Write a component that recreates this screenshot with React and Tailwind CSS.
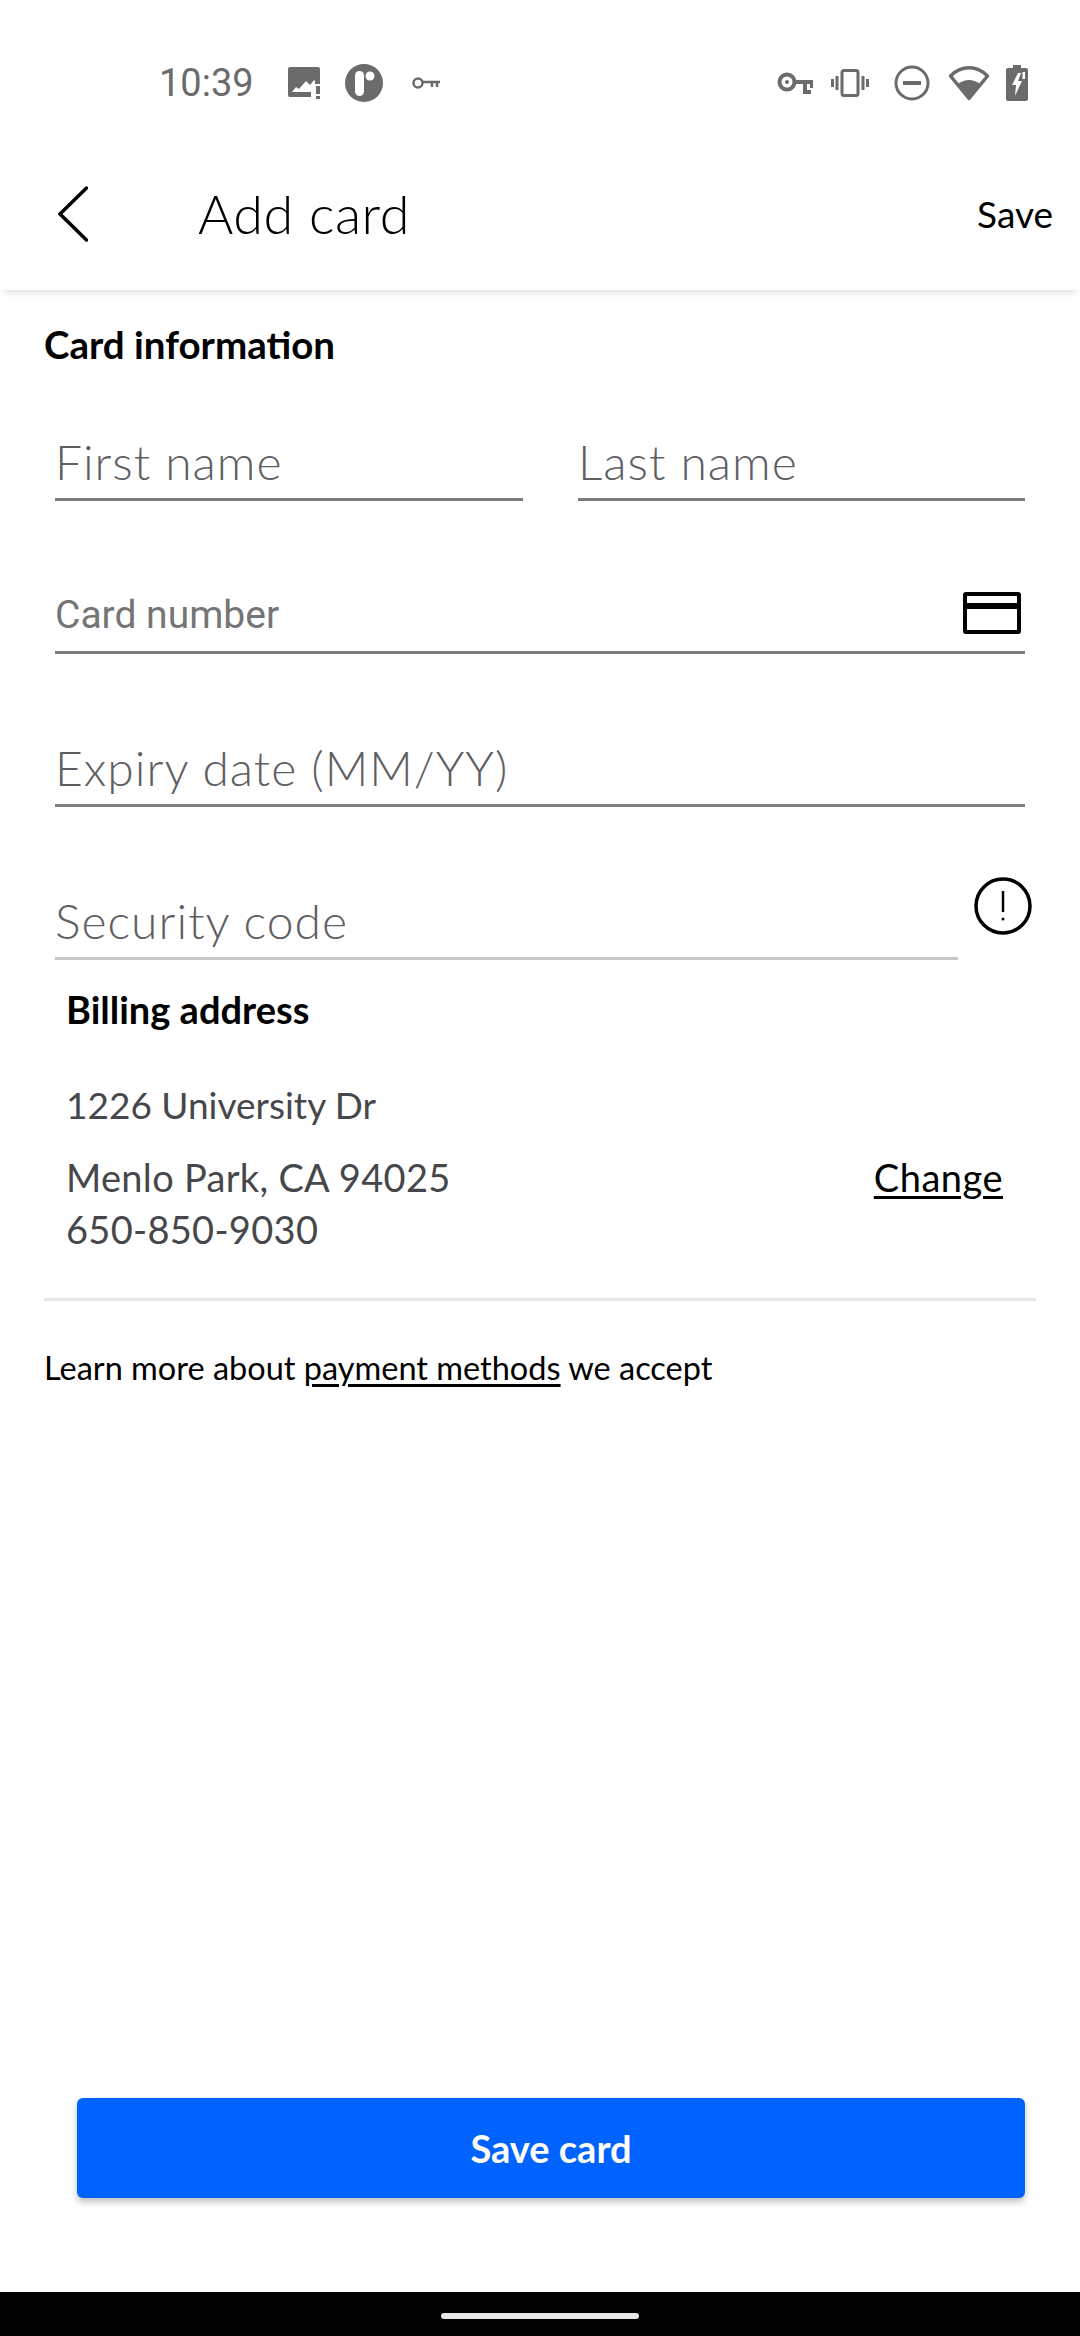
const body = { fontFamily: "Lato, sans-serif" };

function Field({ label, className = "", line = "border-[#7d7d7d]", roboto = false }) {
  return (
    <div className={`h-[63px] border-b-[3px] ${line} ${className}`}>
      <div
        className={roboto ? "text-[39px] leading-[48px] text-[#757575]" : "text-[48px] leading-[48px] font-light tracking-[1px] text-[#5f5f63]"}
        style={roboto ? { fontFamily: "Roboto, sans-serif" } : body}
      >
        {label}
      </div>
    </div>
  );
}

function StatusLeft() {
  return (
    <div className="flex items-center">
      <span className="text-[38px] leading-[44px] text-[#6b6b6b]" style={{ fontFamily: "Roboto, sans-serif" }}>
        10:39
      </span>
      <svg className="ml-[34px]" width="32" height="32" viewBox="0 0 32 32" fill="#6b6b6b">
        <path d="M2 0h28a2 2 0 0 1 2 2v15h-5V14l-1-1-4 5-4-4-7 8-3-2-4 5h19v5H2a2 2 0 0 1-2-2V2a2 2 0 0 1 2-2z" />
        <rect x="28" y="19" width="4" height="8" />
        <rect x="28" y="29" width="4" height="3" />
      </svg>
      <svg className="ml-[25px]" width="38" height="38" viewBox="0 0 38 38">
        <circle cx="19" cy="19" r="19" fill="#6b6b6b" />
        <rect x="10" y="7" width="9" height="25" rx="4.5" fill="#fff" />
        <circle cx="25" cy="12" r="4.5" fill="#fff" />
      </svg>
      <svg className="ml-[29px]" width="28" height="16" viewBox="0 0 28 16" fill="none" stroke="#6b6b6b" strokeWidth="2.5">
        <circle cx="6" cy="8" r="4.5" />
        <path d="M11 7h17M20 7v5M25 7v5" />
      </svg>
    </div>
  );
}

function StatusRight() {
  return (
    <div className="flex items-center">
      <svg width="36" height="22" viewBox="0 0 36 22" fill="none" stroke="#6b6b6b" strokeWidth="4">
        <circle cx="10" cy="10" r="7.5" />
        <circle cx="10" cy="10" r="1" strokeWidth="2" />
        <path d="M18 10h17v6M28 10v10h6" />
      </svg>
      <svg className="ml-[18px]" width="38" height="28" viewBox="0 0 38 28" fill="none" stroke="#6b6b6b">
        <rect x="11" y="1.5" width="16" height="25" rx="2" strokeWidth="3" />
        <path d="M6 7v14M1.5 10v8M32 7v14M36.5 10v8" strokeWidth="3" />
      </svg>
      <svg className="ml-[25px]" width="36" height="36" viewBox="0 0 36 36" fill="none" stroke="#6b6b6b" strokeWidth="3">
        <circle cx="18" cy="18" r="16" />
        <path d="M9 18h18" strokeWidth="4" />
      </svg>
      <svg className="ml-[18px]" width="42" height="36" viewBox="0 0 42 36">
        <path d="M21 33.500 2.500 11C13 0 29 0 39.500 11z" fill="none" stroke="#6b6b6b" strokeWidth="3.500" strokeLinejoin="round" />
        <path d="M21 34 9.500 19.500C16 13.500 26 13.500 32.500 19.500z" fill="#6b6b6b" />
      </svg>
      <svg className="ml-[16px]" width="22" height="36" viewBox="0 0 22 36" fill="#6b6b6b">
        <path d="M7 0h8v3h5a2 2 0 0 1 2 2v29a2 2 0 0 1-2 2H2a2 2 0 0 1-2-2V5a2 2 0 0 1 2-2h5z" />
        <path d="M12 8 6 20h4l-1 11 7-15h-4l3-8z" fill="#fff" />
        <rect x="16.500" y="7" width="2.500" height="7" fill="#fff" />
      </svg>
    </div>
  );
}

export default function App() {
  return (
    <div className="flex h-[2336px] w-[1080px] flex-col overflow-hidden bg-white text-black" style={body}>
      {/* status bar */}
      <div className="flex h-[136px] items-center justify-between pt-[30px] pl-[159px] pr-[52px]">
        <StatusLeft />
        <StatusRight />
      </div>

      {/* app bar */}
      <div className="relative z-10 flex h-[154px] items-center bg-white pt-[2px] pr-[27px] pl-[58px] shadow-[0_7px_6px_-4px_rgba(0,0,0,0.12)]">
        <svg width="30" height="56" viewBox="0 0 30 56" fill="none" stroke="#000" strokeWidth="3.500" strokeLinecap="round">
          <path d="M28.500 2 2 28l26.500 26" />
        </svg>
        <h1 className="ml-[110px] text-[54px] leading-[60px] font-light tracking-[0.5px]">Add card</h1>
        <button className="ml-auto text-[37px] leading-[44px]">Save</button>
      </div>

      <main className="flex flex-1 flex-col">
        <h2 className="pt-[32px] pl-[44px] text-[38.5px] leading-[44px] font-bold">Card information</h2>

        <div className="mt-[72px] flex gap-[55px] pl-[55px] pr-[55px]">
          <Field label="First name" className="w-[468px]" />
          <Field label="Last name" className="flex-1" />
        </div>

        <div className="relative mt-[90px] mr-[55px] ml-[55px]">
          <Field label="Card number" roboto />
          <svg className="absolute top-[1px] right-[4px]" width="58" height="42" viewBox="0 0 58 42" fill="none" stroke="#000" strokeWidth="4">
            <rect x="2" y="2" width="54" height="38" rx="1" />
            <path d="M2 14h54" strokeWidth="6" />
          </svg>
        </div>

        <Field label="Expiry date (MM/YY)" className="mt-[90px] mr-[55px] ml-[55px]" />

        <div className="relative mt-[90px] ml-[55px] w-[903px]">
          <Field label="Security code" line="border-[#c8c8c8]" />
          <svg className="absolute top-[-21px] left-[919px]" width="58" height="60" viewBox="0 0 58 60" fill="none" stroke="#000" strokeWidth="3.500">
            <circle cx="29" cy="30" r="27" />
            <path d="M29 15v21" strokeWidth="2.500" />
            <circle cx="29" cy="43" r="1.500" fill="#000" stroke="none" />
          </svg>
        </div>

        <h2 className="mt-[27px] pl-[66px] text-[38px] leading-[44px] font-bold">Billing address</h2>

        <div className="mt-[52px] pl-[66px] text-[37px] leading-[44px] text-[#46474a]">1226 University Dr</div>

        <div className="mt-[24px] flex items-start justify-between pr-[77px] pl-[66px]">
          <div className="text-[38px] leading-[52px] tracking-[0.3px] text-[#46474a]">
            <div>Menlo Park, CA 94025</div>
            <div>650-850-9030</div>
          </div>
          <a className="text-[38px] leading-[52px] tracking-[0.5px] text-black underline underline-offset-4">Change</a>
        </div>

        <div className="mt-[43px] mr-[44px] ml-[44px] h-[3px] bg-[#e8e8e8]" />

        <p className="mt-[47px] pl-[44px] text-[32.5px] leading-[40px] text-black">
          Learn more about <span className="underline underline-offset-4">payment methods</span> we accept
        </p>

        <button className="mt-auto mr-[55px] mb-[94px] ml-[77px] h-[100px] rounded-[6px] bg-[#0062ff] text-[38px] font-bold text-white shadow-[0_4px_6px_rgba(0,0,0,0.25)]">
          Save card
        </button>
      </main>

      {/* gesture bar */}
      <div className="flex h-[44px] items-start justify-center bg-black pt-[21px]">
        <div className="h-[6px] w-[198px] rounded-full bg-[#e8e8e8]" />
      </div>
    </div>
  );
}
